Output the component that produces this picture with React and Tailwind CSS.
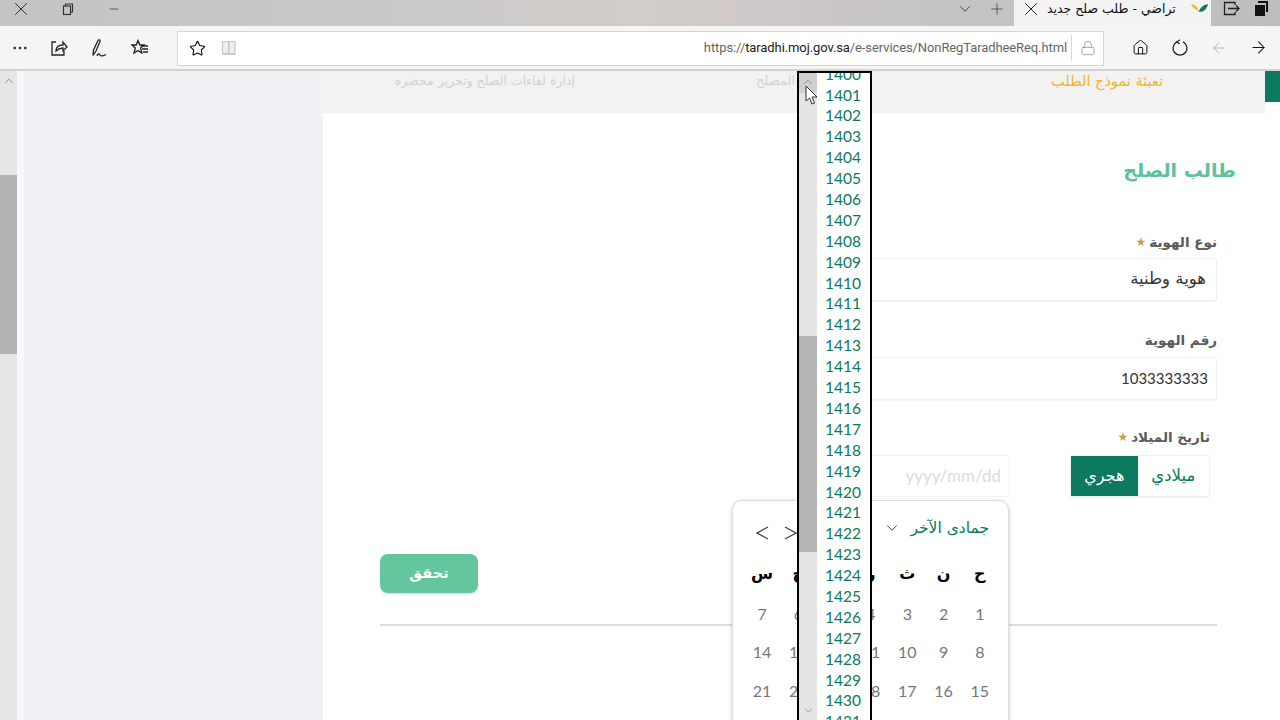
import React from "react";
import { X, Minus, Plus, ChevronDown, ChevronUp, ArrowLeft, ArrowRight, Star, Home, Lock, Ellipsis } from "lucide-react";

const AR = "font-['DejaVu_Sans','Noto_Sans',sans-serif]";
const NUM = "font-['Lato','Noto_Sans',sans-serif]";

const Share = () => (
  <svg width="18" height="18" viewBox="0 0 18 18" fill="none" stroke="#222" strokeWidth="1.3">
    <path d="M6 3H2v13h12v-4" />
    <path d="M6 12c0-4 3-6 7-6V3l4 5-4 4V9c-3 0-5 1-7 3z" />
  </svg>
);
const Pen = () => (
  <svg width="18" height="20" viewBox="0 0 18 20" fill="none" stroke="#222" strokeWidth="1.3">
    <path d="M3 17.500 3.500 12 8 2.500c.6-1.200 2.600-.5 2 .9L6 13z" />
    <path d="M7 18c1-2.500 2-2.500 3-1s2.500 1.500 6-.5" />
  </svg>
);
const FavList = () => (
  <svg width="18" height="18" viewBox="0 0 18 18" fill="none" stroke="#222" strokeWidth="1.3">
    <path d="M7 1.500 8.800 6H13l-3.500 3 1.300 5L7 11.500 3 14l1.300-5L1 6h4.200z" />
    <path d="M10 7h7M11 10h6M12 13h5" />
  </svg>
);
const Book = () => (
  <svg width="16" height="16" viewBox="0 0 16 16" fill="#eee" stroke="#c8c8c8" strokeWidth="1.2">
    <path d="M1.500 1.500h6v12h-6zM8 1.500h6v12H8zM1.500 14.500H14" />
  </svg>
);
const Refresh = () => (
  <svg width="18" height="18" viewBox="0 0 18 18" fill="none" stroke="#222" strokeWidth="1.3">
    <path d="M6 2.800a7 7 0 1 0 6 0" />
    <path d="M9 .8 6 2.800l2.500 2.200" />
  </svg>
);
const ReadAloud = () => (
  <svg width="18" height="16" viewBox="0 0 18 16" fill="none" stroke="#222" strokeWidth="1.3">
    <path d="M12 4V1.500H1.500v12H12V11" />
    <path d="M5 7.500h11M13 4.500l3 3-3 3" />
  </svg>
);
const TabStack = () => (
  <svg width="16" height="16" viewBox="0 0 16 16" fill="#111">
    <path d="M4 0h10v11h-2V2H4z" />
    <rect x="1" y="4" width="10" height="11" />
  </svg>
);
const Logo = () => (
  <svg width="17" height="11" viewBox="0 0 16 10">
    <path d="M0 1c2 0 4 1 6 3l1 3C4 6 1 4 0 1z" fill="#e6c023" />
    <path d="M7 8c2-4 5-7 9-7-1 4-4 8-9 7z" fill="#0c7a54" />
  </svg>
);
const Cursor = () => (
  <svg width="14" height="21" viewBox="0 0 14 21" fill="#fff" stroke="#333" strokeWidth="1">
    <path d="M1 1v15l3.500-3 2.500 6 2.500-1-2.500-6H12z" />
  </svg>
);

const years = Array.from({ length: 32 }, (_, i) => 1400 + i);
const days = ["ح", "ن", "ث", "ر", "خ", "ج", "س"];
const rows = [
  [1, 2, 3, 4, 5, 6, 7],
  [8, 9, 10, 11, 12, 13, 14],
  [15, 16, 17, 18, 19, 20, 21],
];

const Field = ({ label, star, children }) => (
  <div className="flex flex-col items-stretch">
    <div className={`${AR} flex h-[24px] items-center gap-[3px] text-[13.5px] font-bold text-[#5b5b5b]`}>
      <span>{label}</span>
      {star && <span className="text-[12px] text-[#c99a4f]">★</span>}
    </div>
    {children}
  </div>
);

export default function App() {
  return (
    <div dir="ltr" className={`${NUM} relative flex h-[720px] w-[1280px] flex-col overflow-hidden bg-white`}>
      {/* Title bar */}
      <div className="flex h-[26px] shrink-0 items-start bg-[linear-gradient(90deg,#c4c4c4_0%,#c9c9c9_30%,#d2cdca_50%,#cfc8c8_60%,#c4c4c4_75%,#bdbdbd_100%)]">
        <div className="flex h-[18px] w-[130px] items-center pl-[10px]">
          <X size={22} strokeWidth={1} className="shrink-0 text-[#222]" />
          <span className="ml-[29px] flex w-[14px] justify-center"><svg width="12" height="13" viewBox="0 0 12 13" fill="none" stroke="#333" strokeWidth="1.2"><path d="M3.500 3V1h7v8H8.500" /><rect x="1.500" y="3" width="7" height="8.500" /></svg></span>
          <Minus size={14} strokeWidth={1.2} className="ml-[32px] text-[#333]" />
        </div>
        <div className="flex-1" />
        <ChevronDown size={18} strokeWidth={1.2} className="text-[#333]" />
        <Plus size={18} strokeWidth={1.1} className="ml-[14px] mr-[8px] text-[#444]" />
        <div className="flex h-[26px] w-[197px] items-start bg-[#f3f3f3] pl-[6px] pr-[4px]">
          <span className="flex h-[18px] items-center"><X size={22} strokeWidth={1} className="text-[#111]" /></span>
          <span dir="rtl" className={`${AR} ml-[5px] flex-1 whitespace-nowrap pt-[1px] text-[12.5px] leading-[16px] text-[#111]`}>تراضي - طلب صلح جديد</span>
          <span className="ml-[15px] mt-[3px]"><Logo /></span>
        </div>
        <div className="flex w-[69px] items-center justify-between pl-[12px] pr-[10px] pt-[1px]">
          <ReadAloud />
          <TabStack />
        </div>
      </div>

      {/* Toolbar */}
      <div className="flex h-[45px] shrink-0 items-center border-b-[2px] border-[#d2d2d2] bg-[#f5f5f5]">
        <div className="flex w-[177px] items-center pl-[11px]">
          <Ellipsis size={18} strokeWidth={1.5} className="text-[#222]" />
          <span className="ml-[21px] flex"><Share /></span>
          <span className="ml-[22px] flex"><Pen /></span>
          <span className="ml-[23px] flex"><FavList /></span>
        </div>
        <div className="mt-[1px] flex h-[35px] w-[927px] items-center border-[1px] border-[#d4d4d4] bg-white pl-[11px]">
          <Star size={17} strokeWidth={1.6} className="text-[#111]" />
          <span className="ml-[15px] flex"><Book /></span>
          <div className="flex-1 whitespace-nowrap pr-[4px] text-right font-['Roboto',sans-serif] text-[13px] tracking-[-0.1px] text-[#666]">
            https://<span className="text-[#222]">taradhi.moj.gov.sa</span>/e-services/NonRegTaradheeReq.html
          </div>
          <div className="flex h-[26px] w-[32px] items-center justify-center border-l-[1px] border-[#d8d8d8]">
            <Lock size={16} strokeWidth={1.1} className="text-[#888]" />
          </div>
        </div>
        <div className="flex flex-1 items-center pl-[28px]">
          <Home size={17} strokeWidth={1.4} className="text-[#111]" />
          <span className="ml-[22px] flex"><Refresh /></span>
          <ArrowLeft size={18} strokeWidth={1.1} className="ml-[21px] text-[#aaa]" />
          <ArrowRight size={19} strokeWidth={1.3} className="ml-[21px] text-[#111]" />
        </div>
      </div>

      {/* Page */}
      <div className="flex min-h-0 flex-1">
        {/* Left scrollbar */}
        <div className="flex w-[17px] shrink-0 flex-col bg-[#e6e6e6]">
          <div className="flex h-[104px] justify-center pt-[3px]">
            <ChevronUp size={14} strokeWidth={1.4} className="text-[#777]" />
          </div>
          <div className="h-[179px] bg-[#b4b4b4]" />
        </div>
        <div className="w-[7px] shrink-0 bg-[#f8f8fa]" />
        <div className="w-[299px] shrink-0 bg-[#f0f1f5]" />

        {/* Main */}
        <main className="flex w-[942px] shrink-0 flex-col">
          <div dir="rtl" className={`${AR} flex h-[42px] shrink-0 items-start bg-[#f2f2f2] text-[13px]`}>
            <span className="mr-[102px] w-[368px] text-[14.5px] leading-[20px] text-[#efb825]">تعبئة نموذج الطلب</span>
            <span className="w-[220px] leading-[20px] text-[#d2d2d2]">المصلح</span>
            <span className="whitespace-nowrap text-[12.5px] leading-[20px] text-[#d2d2d2]">إدارة لقاءات الصلح وتحرير محضره</span>
          </div>

          <div className="flex flex-1 items-start pl-[57px] pr-[48px]">
            <div className="flex w-[439px] shrink-0 flex-col">
              <button className={`${AR} mt-[441px] flex h-[39px] w-[98px] items-center justify-center rounded-[8px] bg-[#63c69c] text-[14.5px] font-bold text-white shadow-[0_1px_2px_rgba(0,0,0,0.15)]`}>تحقق</button>
            </div>
            <div dir="rtl" className="flex flex-1 flex-col pt-[44px]">
              <h2 className={`${AR} mr-[-19px] h-[32px] text-[19px] leading-[26px] font-bold text-[#5cc29a]`}>طالب الصلح</h2>
              <div className="mt-[41px]">
                <Field label="نوع الهوية" star>
                  <div className={`${AR} mt-[4px] flex h-[43px] items-center rounded-[2px] border border-[#efefef] pr-[10px] text-[16.5px] text-[#333] shadow-[0_1px_1px_rgba(0,0,0,0.05)]`}>هوية وطنية</div>
                </Field>
              </div>
              <div className="mt-[27px]">
                <Field label="رقم الهوية">
                  <div className="mt-[5px] flex h-[43px] items-center justify-start rounded-[2px] border border-[#efefef] pr-[8px] text-[15px] text-[#333] shadow-[0_1px_1px_rgba(0,0,0,0.05)]"><span dir="ltr">1033333333</span></div>
                </Field>
              </div>
              <div className="mt-[25px] pr-[7px]">
                <Field label="تاريخ الميلاد" star>
                  <div className="mt-[6px] flex items-center">
                    <div className="flex h-[42px] w-[140px] shrink-0 rounded-[2px] border border-[#efefef] shadow-[0_1px_1px_rgba(0,0,0,0.05)]">
                      <div className={`${AR} flex w-[72px] items-center justify-center text-[16.5px] text-[#0b7a5e]`}>ميلادي</div>
                      <div className={`${AR} flex w-[67px] items-center justify-center bg-[#0b7a5e] text-[16px] text-white`}>هجري</div>
                    </div>
                    <div className="mr-[60px] flex h-[42px] flex-1 items-center rounded-[2px] border border-[#f2f2f2] pr-[8px] text-[17px] text-[#dcdcdc]"><span dir="ltr">yyyy/mm/dd</span></div>
                  </div>
                </Field>
              </div>
            </div>
          </div>
          <div className="mb-[94px] ml-[57px] mr-[48px] h-[2px] shrink-0 bg-[#dddddd]" />
        </main>

        {/* Right edge */}
        <div className="flex-1 bg-white">
          <div className="h-[31px] bg-[#0b7a5e]" />
        </div>
      </div>

      {/* Calendar popup */}
      <div className="absolute left-[732px] top-[500px] h-[240px] w-[277px] rounded-[10px] border border-[#dcdcdc] bg-white shadow-[0_1px_4px_rgba(0,0,0,0.2)]">
        <div className="flex h-[41px] items-end justify-between pb-[2px] pl-[23px] pr-[19px]">
          <div className="flex items-center gap-[15px] text-[#444]">
            <svg width="13" height="14" viewBox="0 0 13 14" fill="none" stroke="#444" strokeWidth="1.3"><path d="M12 1 1 7l11 6" /></svg>
            <svg width="13" height="14" viewBox="0 0 13 14" fill="none" stroke="#444" strokeWidth="1.3"><path d="m1 1 11 6-11 6" /></svg>
          </div>
          <div className="flex items-center gap-[9px] pb-[2px]">
            <ChevronDown size={18} strokeWidth={1.2} className="text-[#222]" />
            <span dir="rtl" className={`${AR} text-[15.5px] leading-[20px] text-[#0b7a5e]`}>جمادى الآخر</span>
          </div>
        </div>
        <div dir="rtl" className="grid grid-cols-[repeat(7,36.3px)] pr-[10px] pt-[10.5px]">
          {days.map((d) => (
            <div key={d} className={`${AR} flex h-[42px] items-center justify-center text-[16px] font-bold text-black`}>{d}</div>
          ))}
          {rows.flat().map((n) => (
            <div key={n} className="flex h-[38.5px] items-center justify-center text-[16px] text-[#777]">{n}</div>
          ))}
        </div>
      </div>

      {/* Year dropdown */}
      <div className="absolute left-[797px] top-[71px] flex h-[649px] w-[75px] overflow-hidden border-x-[2px] border-t-[2px] border-black bg-white">
        <div className="flex w-[18px] shrink-0 flex-col bg-[#e4e4e4]">
          <div className="flex h-[20px] shrink-0 justify-center bg-[#cfcfcf] pt-[2px]">
            <ChevronUp size={14} strokeWidth={1.2} className="text-[#777]" />
          </div>
          <div className="mt-[243px] h-[216px] shrink-0 bg-[#b5b5b5]" />
          <div className="flex flex-1 items-end justify-center pb-[3px]">
            <ChevronDown size={13} strokeWidth={1.2} className="text-[#777]" />
          </div>
        </div>
        <div className="mt-[-9px] flex flex-1 flex-col items-end pr-[9px]">
          {years.map((y) => (
            <div key={y} className="flex h-[20.9px] shrink-0 items-center text-[15.5px] leading-none text-[#0b7a5e]">{y}</div>
          ))}
        </div>
      </div>
      <div className="absolute left-[805px] top-[85px]"><Cursor /></div>
    </div>
  );
}
